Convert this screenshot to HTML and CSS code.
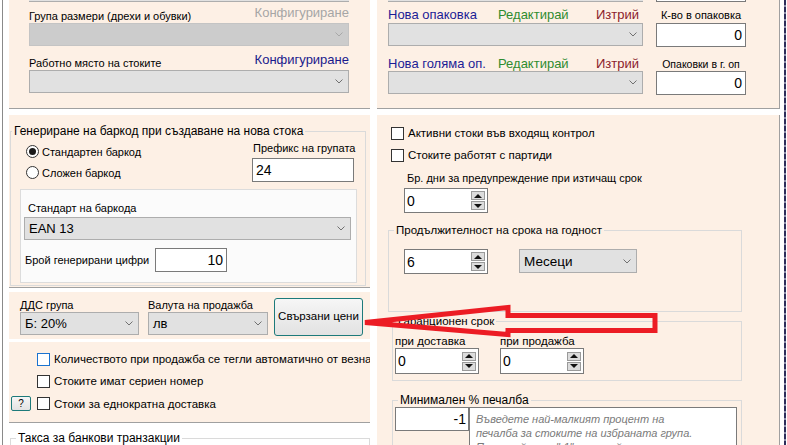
FILE: index.html
```html
<!DOCTYPE html>
<html lang="bg">
<head>
<meta charset="utf-8">
<title>Група</title>
<link rel="stylesheet" href="styles.css">
</head>
<body>
<div class="screen">
  <div class="frame">
    <div class="col-left">
      <div class="panel p1 bb">
        <div class="cut cut-sel"></div>
        <div class="lbl-row"><span>Група размери (дрехи и обувки)</span><span class="cfg cfg-off">Конфигуриране</span></div>
        <div class="select disabled"><span></span><svg class="chev" viewBox="0 0 8 5"><polyline points="0.5,0.5 4,4 7.5,0.5"/></svg></div>
        <div class="lbl-row r2"><span>Работно място на стоките</span><span class="cfg cfg-on">Конфигуриране</span></div>
        <div class="select"><span></span><svg class="chev" viewBox="0 0 8 5"><polyline points="0.5,0.5 4,4 7.5,0.5"/></svg></div>
      </div>

      <div class="panel p2 bb">
        <fieldset class="grp g-barcode">
          <legend>Генериране на баркод при създаване на нова стока</legend>
          <div class="bc-top">
            <div class="radios">
              <label class="radio-row"><span class="radio on"></span>Стандартен баркод</label>
              <label class="radio-row"><span class="radio"></span>Сложен баркод</label>
            </div>
            <div class="prefix">
              <div class="lbl">Префикс на групата</div>
              <div class="input prefix-in">24</div>
            </div>
          </div>
          <div class="inner-box">
            <div class="lbl std-lbl">Стандарт на баркода</div>
            <div class="select std-sel"><span>EAN 13</span><svg class="chev" viewBox="0 0 8 5"><polyline points="0.5,0.5 4,4 7.5,0.5"/></svg></div>
            <div class="digits">
              <span>Брой генерирани цифри</span>
              <div class="input digits-in num">10</div>
            </div>
          </div>
        </fieldset>
      </div>

      <div class="panel p3">
        <div class="field f-vat">
          <div class="lbl">ДДС група</div>
          <div class="select"><span>Б: 20%</span><svg class="chev" viewBox="0 0 8 5"><polyline points="0.5,0.5 4,4 7.5,0.5"/></svg></div>
        </div>
        <div class="field f-cur">
          <div class="lbl">Валута на продажба</div>
          <div class="select"><span>лв</span><svg class="chev" viewBox="0 0 8 5"><polyline points="0.5,0.5 4,4 7.5,0.5"/></svg></div>
        </div>
        <div class="btn btn-prices">Свързани цени</div>
      </div>

      <div class="panel p4 bb">
        <label class="chk-row indent"><span class="chk focus"></span>Количеството при продажба се тегли автоматично от везна</label>
        <label class="chk-row indent"><span class="chk"></span>Стоките имат сериен номер</label>
        <div class="chk-row q-row"><span class="btn btn-q">?</span><span class="chk"></span>Стоки за еднократна доставка</div>
      </div>

      <fieldset class="grp g-fee">
        <legend>Такса за банкови транзакции</legend>
      </fieldset>
    </div>

    <div class="col-right">
      <div class="panel rp1 bb br">
        <div class="pk-grid">
          <div class="cut cut-sel"></div>
          <div class="cut cut-in"></div>
          <div class="pk-labels"><span class="blue">Нова опаковка</span><span class="green">Редактирай</span><span class="red">Изтрий</span></div>
          <div class="pk-small">К-во в опаковка</div>
          <div class="select"><span></span><svg class="chev" viewBox="0 0 8 5"><polyline points="0.5,0.5 4,4 7.5,0.5"/></svg></div>
          <div class="input num">0</div>
          <div class="pk-labels r2"><span class="blue">Нова голяма оп.</span><span class="green">Редактирай</span><span class="red">Изтрий</span></div>
          <div class="pk-small r2 small2">Опаковки в г. оп</div>
          <div class="select"><span></span><svg class="chev" viewBox="0 0 8 5"><polyline points="0.5,0.5 4,4 7.5,0.5"/></svg></div>
          <div class="input num">0</div>
        </div>
      </div>

      <div class="panel rp2 br">
        <label class="chk-row r-chk"><span class="chk"></span>Активни стоки във входящ контрол</label>
        <label class="chk-row r-chk"><span class="chk"></span>Стоките работят с партиди</label>
        <div class="lbl warn-lbl">Бр. дни за предупреждение при изтичащ срок</div>
        <div class="input spin warn-spin"><span>0</span><span class="spin-btns"><span class="sb up"></span><span class="sb down"></span></span></div>

        <fieldset class="grp g-life">
          <legend>Продължителност на срока на годност</legend>
          <div class="life-row">
            <div class="input spin life-spin"><span>6</span><span class="spin-btns"><span class="sb up"></span><span class="sb down"></span></span></div>
            <div class="select life-sel"><span>Месеци</span><svg class="chev" viewBox="0 0 8 5"><polyline points="0.5,0.5 4,4 7.5,0.5"/></svg></div>
          </div>
        </fieldset>

        <fieldset class="grp g-warr">
          <legend>Гаранционен срок</legend>
          <div class="warr-row">
            <div class="field w-f">
              <div class="lbl">при доставка</div>
              <div class="input spin w-spin"><span>0</span><span class="spin-btns"><span class="sb up"></span><span class="sb down"></span></span></div>
            </div>
            <div class="field w-f">
              <div class="lbl">при продажба</div>
              <div class="input spin w-spin"><span>0</span><span class="spin-btns"><span class="sb up"></span><span class="sb down"></span></span></div>
            </div>
          </div>
        </fieldset>

        <fieldset class="grp g-profit">
          <legend>Минимален % печалба</legend>
          <div class="profit-row">
            <div class="input num profit-in">-1</div>
            <div class="hint">Въведете най-малкият процент на печалба за стоките на избраната група. При стойност "-1" настройката не е активна.</div>
          </div>
        </fieldset>
      </div>
    </div>

    <div class="edge"></div>
  </div>
</div>

<svg class="arrow" viewBox="0 0 787 445" width="787" height="445">
  <polygon points="365,322.5 508,307.5 508,315.5 655,315.5 655,330.5 508,330.5 508,334.5" />
</svg>
</body>
</html>
```

FILE: styles.css
```css
* { box-sizing: border-box; }
html, body { margin: 0; padding: 0; }
body {
  width: 787px;
  height: 445px;
  overflow: hidden;
  background: #ffffff;
  font-family: "Liberation Sans", Arial, sans-serif;
  font-size: 11px;
  color: #000;
  position: relative;
}
.screen { display: flex; height: 445px; padding-left: 2px; overflow: hidden; }
.frame {
  display: flex;
  height: 445px;
  border-left: 1px solid #8a8a8a;
  padding-left: 6px;
}
.col-left { width: 361px; display: flex; flex-direction: column; flex: none; overflow: hidden; }
.col-right { width: 403px; margin-left: 7px; display: flex; flex-direction: column; flex: none; overflow: hidden; }
.col-left > *, .col-right > * { flex: none; }
.edge {
  width: 2px;
  margin-left: 4px;
  flex: none;
  background: repeating-linear-gradient(to bottom, #2d2d5a 0 5px, #8c8ca8 5px 7px);
}

.panel { background: #fdf0e5; }
.bb { border-bottom: 1px solid #a0a0a0; }
.br { border-right: 1px solid #a0a0a0; }

.lbl { line-height: 14px; white-space: nowrap; font-size: 11px; }

/* generic controls */
.select {
  height: 23px;
  background: #e1e1e1;
  border: 1px solid #adadad;
  display: flex;
  align-items: center;
  justify-content: space-between;
  padding: 0 5px 0 4px;
  font-size: 13px;
}
.select.disabled { background: #cccccc; border-color: #c4c4c4; }
.chev { width: 8px; height: 5px; flex: none; }
.chev polyline { fill: none; stroke: #707070; stroke-width: 1; }
.select.disabled .chev polyline { stroke: #a8a8a8; }

.input {
  height: 24px;
  background: #fff;
  border: 1px solid #7a7a7a;
  font-size: 14px;
  line-height: 22px;
  padding: 0 2px;
}
.input.num { text-align: right; }

.spin { display: flex; align-items: center; justify-content: space-between; padding: 0 2px 0 2px; height: 25px; }
.spin-btns { display: flex; flex-direction: column; gap: 1px; width: 14px; }
.sb {
  height: 9px;
  background: #dcdcdc;
  border: 1px solid #9a9a9a;
  display: flex;
  align-items: center;
  justify-content: center;
}
.sb::after {
  content: "";
  width: 0; height: 0;
  border-left: 4px solid transparent;
  border-right: 4px solid transparent;
}
.sb.up::after { border-bottom: 4px solid #111; }
.sb.down::after { border-top: 4px solid #111; }

.chk {
  width: 13px; height: 13px;
  border: 1px solid #333;
  background: #fff;
  flex: none;
  margin-right: 4px;
}
.chk.focus { border-color: #1a73d0; }
.chk-row { display: flex; align-items: center; white-space: nowrap; font-size: 11.5px; }

.radio {
  width: 13px; height: 13px;
  border: 1px solid #333;
  border-radius: 50%;
  background: #fff;
  flex: none;
  margin-right: 3px;
  display: flex;
  align-items: center;
  justify-content: center;
}
.radio.on::after { content: ""; width: 7px; height: 7px; border-radius: 50%; background: #1a1a1a; }
.radio-row { display: flex; align-items: center; height: 21px; font-size: 11px; white-space: nowrap; }

.btn {
  border: 1px solid #1d7a7a;
  border-radius: 3px;
  background: linear-gradient(#f6f6f6, #e2e2e2);
  display: flex;
  align-items: center;
  justify-content: center;
  white-space: nowrap;
}

.grp {
  margin: 0;
  padding: 0;
  border: 1px solid #dadada;
  min-width: 0;
}
.grp > legend {
  padding: 0 2px;
  margin-left: 1px;
  line-height: 14px;
  font-size: 12px;
  white-space: nowrap;
}

/* top-left panel */
.p1 { height: 109px; width: 361px; padding: 0 21px 0 20px; }
.cut { height: 2px; }
.cut-sel { background: #e1e1e1; border-bottom: 1px solid #adadad; }
.cut-in { background: #fff; border-bottom: 1px solid #7a7a7a; border-left: 1px solid #7a7a7a; border-right: 1px solid #7a7a7a; }
.lbl-row {
  height: 16px;
  margin-top: 5px;
  display: flex;
  justify-content: space-between;
  align-items: flex-end;
  line-height: 14px;
  font-size: 11px;
  white-space: nowrap;
}
.lbl-row.r2 { margin-top: 8px; }
.cfg { font-size: 13px; line-height: 16px; padding-bottom: 2px; }
.cfg-off { color: #a6a6a6; }
.cfg-on { color: #1a1a8c; }

/* barcode panel */
.p2 { margin-top: 6px; height: 173px; padding: 9px 4px 0 1px; }
.g-barcode { height: 162px; }
.bc-top { display: flex; justify-content: space-between; padding: 3px 11px 0 15px; }
.radios { display: flex; flex-direction: column; }
.prefix { width: 102px; display: flex; flex-direction: column; }
.prefix .lbl { padding-left: 1px; }
.prefix-in { margin-top: 3px; width: 102px; padding-left: 3px; }
.inner-box {
  margin: 6px 8px 0 9px;
  height: 94px;
  background: #fbfbfb;
  border: 1px solid #dcdcdc;
  padding: 11px 5px 0 3px;
}
.std-lbl { padding-left: 4px; }
.std-sel { margin-top: 2px; width: 327px; }
.digits { display: flex; align-items: center; margin-top: 8px; font-size: 11px; white-space: nowrap; }
.digits span { width: 131px; padding-left: 1px; }
.digits-in { width: 72px; padding-right: 3px; }

/* vat panel */
.p3 { margin-top: 4px; height: 47px; display: flex; align-items: flex-start; padding: 6px 0 0 11px; }
.field { display: flex; flex-direction: column; }
.f-vat { width: 119px; }
.f-cur { width: 120px; margin-left: 9px; }
.btn-prices { width: 89px; height: 38px; margin-left: 6px; font-size: 11.5px; padding-bottom: 3px; }

/* checkbox panel */
.p4 { margin-top: 3px; height: 81px; padding-top: 6px; }
.p4 .chk-row { height: 22px; }
.p4 .indent { padding-left: 28px; }
.p4 .q-row { padding-left: 2px; height: 23px; }
.btn-q { width: 20px; height: 15px; margin-right: 6px; font-size: 10px; border-radius: 2px; }

.grp.g-fee { margin: 8px 0 0 1px; height: 14px; border-bottom: none; width: 360px; }
.g-fee > legend { margin-left: 5px; font-size: 12px; }

/* right top panel */
.rp1 { height: 109px; padding-left: 11px; }
.pk-grid {
  display: grid;
  grid-template-columns: 255px 90px;
  column-gap: 13px;
  grid-template-rows: 2px 21px 24px 24px 24px;
}
.pk-grid .select { height: 23px; }
.pk-grid .input { height: 24px; padding-right: 3px; }
.pk-labels {
  display: grid;
  grid-template-columns: 110px 1fr auto;
  align-items: end;
  font-size: 13px;
  line-height: 16px;
  padding-right: 4px;
  white-space: nowrap;
}
.pk-labels.r2 { margin-bottom: -1px; }
.pk-small { text-align: center; align-self: end; font-size: 11px; line-height: 14px; padding-bottom: 1px; white-space: nowrap; }
.pk-small.r2 { margin-bottom: -1px; }
.small2 { font-size: 10.5px; }
.blue { color: #1c1c96; }
.green { color: #2f8c2f; }
.red { color: #8b1c2c; }

/* right lower panel */
.rp2 { margin-top: 6px; flex: 1 1 auto !important; min-height: 0; padding: 7px 0 0 14px; overflow: hidden; }
.r-chk { height: 22px; }
.warn-lbl { margin: 5px 0 0 16px; }
.warn-spin { margin: 3px 0 0 13px; width: 84px; }

.grp.g-life { margin: 10px 0 0 -3px; width: 354px; height: 89px; }
.g-life > legend { margin-left: 5px; font-size: 11.5px; }
.life-row { display: flex; align-items: flex-start; padding: 12px 0 0 15px; }
.life-spin { width: 84px; }
.life-sel { width: 118px; margin-left: 31px; height: 24px; font-size: 13.5px; }

.grp.g-warr { margin: 2px 0 0 1px; width: 350px; height: 67px; }
.g-warr > legend { margin-left: 3px; font-size: 11.5px; }
.warr-row { display: flex; padding: 6px 0 0 2px; gap: 21px; }
.w-f .lbl { font-size: 11.5px; }
.w-spin { width: 84px; height: 26px; }

.grp.g-profit { margin: 12px 0 0 1px; width: 350px; height: 52px; border-bottom: none; }
.g-profit > legend { margin-left: 5px; font-size: 12px; }
.profit-row { display: flex; padding-left: 2px; }
.profit-in { width: 74px; padding-right: 2px; }
.hint {
  width: 268px;
  height: 38px;
  border: 1px solid #7a7a7a;
  border-bottom: none;
  background: #fff;
  font-style: italic;
  color: #7a7a7a;
  font-size: 11px;
  line-height: 14px;
  padding: 4px 36px 0 6px;
  overflow: hidden;
}

.arrow { position: absolute; left: 0; top: 0; pointer-events: none; }
.arrow polygon { fill: none; stroke: #ec1c24; stroke-width: 5; stroke-linejoin: miter; stroke-miterlimit: 10; }
```
